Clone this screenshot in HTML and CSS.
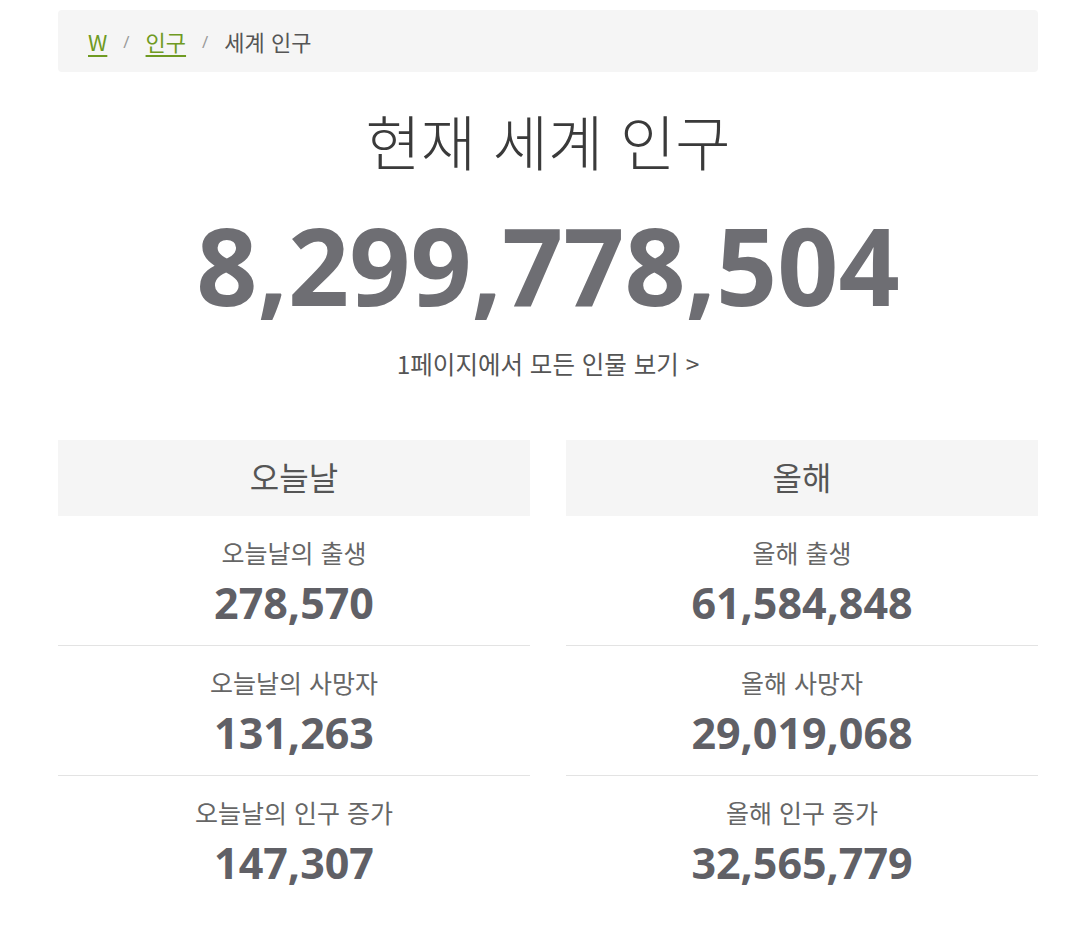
FILE: index.html
```html
<!DOCTYPE html>
<html lang="ko">
<head>
<meta charset="utf-8">
<title>현재 세계 인구</title>
<link rel="stylesheet" href="styles.css">
</head>
<body>
<div class="page">
  <nav class="crumbs">
    <a class="crumb-link" href="#">W</a>
    <span class="sep">/</span>
    <a class="crumb-link" href="#">인구</a>
    <span class="sep">/</span>
    <span class="crumb-current">세계 인구</span>
  </nav>

  <h1 class="title">현재 세계 인구</h1>
  <div class="total">8,299,778,504</div>
  <a class="more" href="#">1페이지에서 모든 인물 보기 &gt;</a>

  <div class="columns">
    <section class="col">
      <div class="col-head">오늘날</div>
      <div class="stat">
        <div class="stat-label">오늘날의 출생</div>
        <div class="stat-value">278,570</div>
      </div>
      <div class="stat">
        <div class="stat-label">오늘날의 사망자</div>
        <div class="stat-value">131,263</div>
      </div>
      <div class="stat">
        <div class="stat-label">오늘날의 인구 증가</div>
        <div class="stat-value">147,307</div>
      </div>
    </section>
    <section class="col">
      <div class="col-head">올해</div>
      <div class="stat">
        <div class="stat-label">올해 출생</div>
        <div class="stat-value">61,584,848</div>
      </div>
      <div class="stat">
        <div class="stat-label">올해 사망자</div>
        <div class="stat-value">29,019,068</div>
      </div>
      <div class="stat">
        <div class="stat-label">올해 인구 증가</div>
        <div class="stat-value">32,565,779</div>
      </div>
    </section>
  </div>
</div>
</body>
</html>
```

FILE: styles.css
```css
html, body {
  margin: 0;
  padding: 0;
  background: #ffffff;
}

body {
  font-family: "Noto Sans CJK KR", "Noto Sans", sans-serif;
  color: #444;
}

.page {
  width: 980px;
  margin: 10px 0 0 58px;
  display: flex;
  flex-direction: column;
  align-items: center;
}

/* breadcrumb bar */
.crumbs {
  align-self: stretch;
  height: 62px;
  box-sizing: border-box;
  background: #f5f5f5;
  border-radius: 4px;
  padding: 0 30px;
  display: flex;
  align-items: center;
  gap: 16px;
  font-size: 22px;
}

.crumb-link {
  color: #6f9a22;
  text-decoration: underline;
  text-underline-offset: 4px;
}

.sep {
  color: #999;
  font-family: "Open Sans", sans-serif;
  font-size: 17px;
}

.crumb-current {
  color: #555;
}

/* headline */
.title {
  margin: 33px 0 0;
  font-size: 60px;
  line-height: 70px;
  font-weight: 300;
  color: #3a3a3a;
}

.total {
  margin-top: 30px;
  font-family: "Open Sans", sans-serif;
  font-weight: 700;
  font-size: 107px;
  line-height: 120px;
  color: #6e6e73;
}

.more {
  margin-top: 24px;
  font-size: 24.5px;
  line-height: 30px;
  color: #555;
  text-decoration: none;
}

/* two stat columns */
.columns {
  align-self: stretch;
  margin-top: 61px;
  display: grid;
  grid-template-columns: 472px 472px;
  justify-content: space-between;
}

.col {
  display: flex;
  flex-direction: column;
}

.col-head {
  height: 76px;
  box-sizing: border-box;
  padding-bottom: 4px;
  background: #f5f5f5;
  display: flex;
  align-items: center;
  justify-content: center;
  font-size: 32px;
  color: #555;
}

.stat {
  padding: 21px 0 17px;
  display: flex;
  flex-direction: column;
  align-items: center;
  gap: 11px;
}

.stat + .stat {
  border-top: 1px solid #e3e3e3;
}

.stat-label {
  font-size: 25px;
  line-height: 30px;
  color: #666;
}

.stat-value {
  font-family: "Open Sans", sans-serif;
  font-weight: 700;
  font-size: 43px;
  line-height: 50px;
  color: #606066;
}
```
